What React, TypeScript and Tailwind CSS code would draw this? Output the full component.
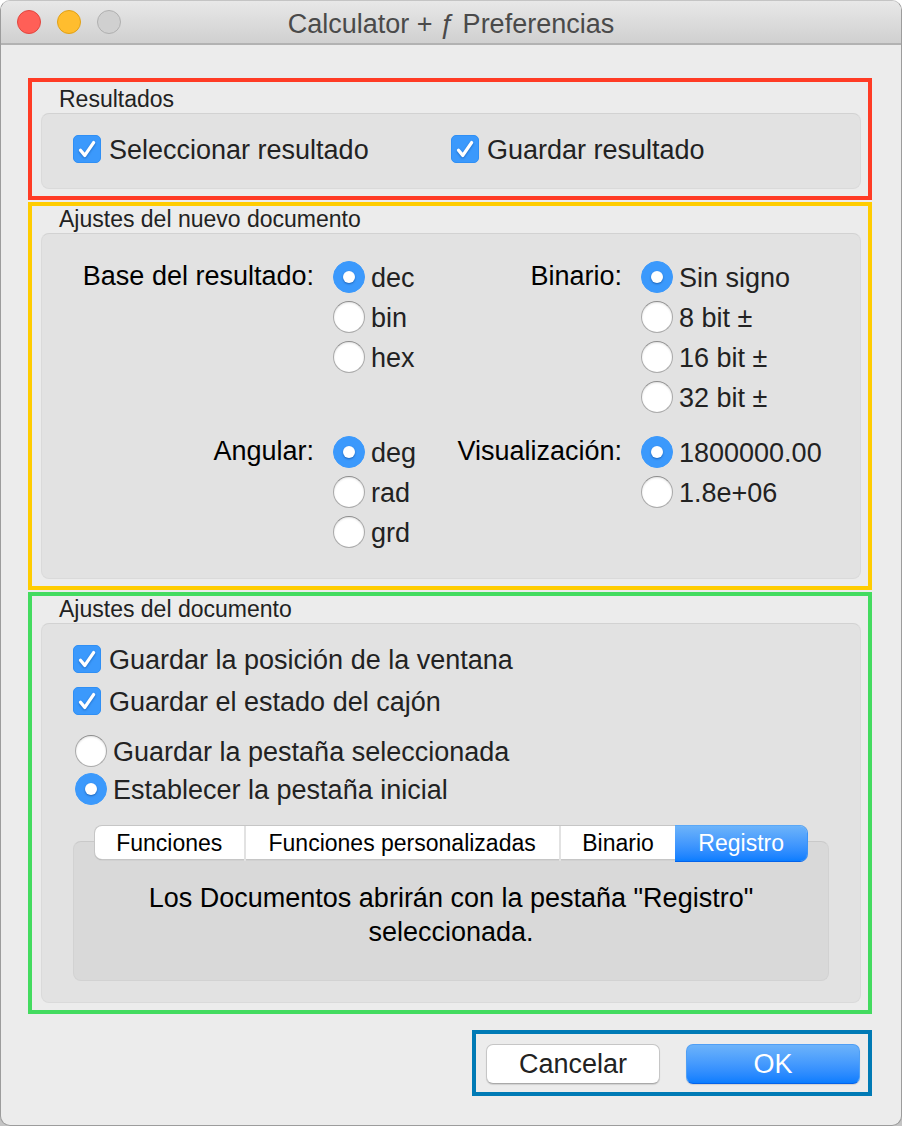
// Preferences window for Calculator + ƒ.
//
// Three boxed groups (results, new document, document) and the
// Cancel / OK pair. Every box has its own highlight colour.

import { useState, type ReactNode } from "react";

const TABS = ["Funciones", "Funciones personalizadas", "Binario", "Registro"];

/* ── Controls ── */

function Checkbox({ label }: { label: string }) {
  return (
    <label className="flex items-center gap-2 whitespace-nowrap text-[#222]">
      <span className="grid size-7 shrink-0">
        <input
          type="checkbox"
          defaultChecked
          className="peer col-start-1 row-start-1 size-7 appearance-none rounded-[5px] border border-[#aaa] bg-white checked:border-[#2f8ff5] checked:bg-[#3b99fc]"
        />
        <svg
          viewBox="0 0 28 28"
          className="pointer-events-none invisible col-start-1 row-start-1 size-7 drop-shadow-[0_1px_1px_rgba(0,60,140,0.5)] peer-checked:visible"
          fill="none"
          stroke="white"
          strokeWidth="3.3"
          strokeLinecap="round"
          strokeLinejoin="round"
        >
          <path d="M7.5 15.2 L11.8 20.4 L20.6 7.6" />
        </svg>
      </span>
      <span className="pt-0.5">{label}</span>
    </label>
  );
}

function Radio({ name, label, checked }: { name: string; label: string; checked?: boolean }) {
  return (
    <label className="flex h-full items-center gap-1.5 whitespace-nowrap text-[#222]">
      <input
        type="radio"
        name={name}
        defaultChecked={checked}
        className="grid size-8 shrink-0 appearance-none place-items-center rounded-full border border-[#aaa] border-t-[#8c8c8c] bg-white shadow-[inset_0_1px_2px_rgba(0,0,0,0.12)] before:size-3 before:rounded-full checked:border-[#3b99fc] checked:bg-[#3b99fc] checked:shadow-none checked:before:bg-white checked:before:shadow-[0_1px_2px_rgba(0,50,120,0.5)]"
      />
      <span className="pt-0.5">{label}</span>
    </label>
  );
}

function RadioGroup({ title, name, options }: { title: string; name: string; options: string[] }) {
  return (
    <>
      <span id={`${name}-label`} className="h-10 text-right leading-[38px] whitespace-nowrap text-black">
        {title}
      </span>
      <div role="radiogroup" aria-labelledby={`${name}-label`}>
        {options.map((option, i) => (
          <div key={option} className="h-10">
            <Radio name={name} label={option} checked={i === 0} />
          </div>
        ))}
      </div>
    </>
  );
}

function Group({ title, color, children }: { title: string; color: string; children: ReactNode }) {
  return (
    <section className={`border-4 pr-[7px] pb-[7px] pl-[9px] ${color}`}>
      <h2 className="pl-[18px] text-[23px] leading-[27px] text-[#222]">{title}</h2>
      <div className="rounded-lg border border-[#dadada] border-t-[#d2d2d2] bg-[#e2e2e2]">{children}</div>
    </section>
  );
}

/* ── Window ── */

export default function App() {
  const [tab, setTab] = useState("Registro");

  return (
    <div className="min-h-screen bg-linear-to-b from-white to-[#c4c4c4] font-['Liberation_Sans',Arial,sans-serif] text-[27px]">
      <div className="flex min-h-screen flex-col rounded-[10px] border border-[#9c9c9c] border-t-[#c4c4c4] bg-[#ececec]">
        {/* ── Title bar ── */}
        <header className="grid h-11 grid-cols-[1fr_auto_1fr] items-center rounded-t-[9px] border-b-2 border-[#b2b2b2] bg-linear-to-b from-[#e8e8e8] to-[#d0d0d0] px-4">
          <div className="flex gap-4">
            <button aria-label="Cerrar" className="size-6 rounded-full border border-[#e2463f] bg-[#ff5f57]" />
            <button aria-label="Minimizar" className="size-6 rounded-full border border-[#e1a116] bg-[#ffbd2e]" />
            <button aria-label="Ampliar" disabled className="size-6 rounded-full border border-[#b0b0b0] bg-[#d0d0d0]" />
          </div>
          <h1 className="pt-1 leading-9 text-[#4a4a4a]">Calculator + ƒ Preferencias</h1>
        </header>

        <main className="flex flex-col gap-0.5 px-[27px] pt-[33px] pr-[29px]">
          <Group title="Resultados" color="border-[#ff3b25] pt-1">
            <div className="grid h-[74px] grid-cols-2 items-center px-[31px] pb-1">
              <Checkbox label="Seleccionar resultado" />
              <Checkbox label="Guardar resultado" />
            </div>
          </Group>

          <Group title="Ajustes del nuevo documento" color="border-[#ffcc00]">
            <div className="grid grid-cols-[272px_1fr_168px_219px] gap-x-[19px] gap-y-[15px] pt-[23px] pb-[26px]">
              <RadioGroup title="Base del resultado:" name="base" options={["dec", "bin", "hex"]} />
              <RadioGroup title="Binario:" name="binario" options={["Sin signo", "8 bit ±", "16 bit ±", "32 bit ±"]} />
              <RadioGroup title="Angular:" name="angular" options={["deg", "rad", "grd"]} />
              <RadioGroup title="Visualización:" name="visualizacion" options={["1800000.00", "1.8e+06"]} />
            </div>
          </Group>

          <Group title="Ajustes del documento" color="border-[#43db5f]">
            <div className="px-[31px] pt-3.5 pb-[21px]">
              <div className="grid auto-rows-[42px] items-center">
                <Checkbox label="Guardar la posición de la ventana" />
                <Checkbox label="Guardar el estado del cajón" />
              </div>
              <div role="radiogroup" aria-label="Pestaña" className="mt-2.5 grid auto-rows-[38px] pl-0.5">
                <Radio name="pestana" label="Guardar la pestaña seleccionada" />
                <Radio name="pestana" label="Establecer la pestaña inicial" checked />
              </div>

              {/* Tab bar straddles the top edge of its panel */}
              <div
                role="tablist"
                className="relative mx-[22px] mt-[18px] grid h-[33px] grid-cols-[151fr_316fr_115fr_132fr] rounded-[7px] bg-white text-[23px] shadow-[0_0_0_1px_#c6c6c6,0_1px_1px_0_#8c8c8c]"
              >
                {TABS.map((name) => (
                  <button
                    key={name}
                    role="tab"
                    aria-selected={tab === name}
                    onClick={() => setTab(name)}
                    className="border-r-2 border-[#e2e2e2] whitespace-nowrap text-black first:rounded-l-[7px] last:rounded-r-[7px] last:border-r-0 aria-selected:border-transparent aria-selected:bg-linear-to-b aria-selected:from-[#6cb3fa] aria-selected:to-[#087dff] aria-selected:text-white aria-selected:shadow-[0_-1px_0_#5aa8f7,1px_0_0_#3b93f7,0_1px_0_#0463ea] has-[+[aria-selected=true]]:border-r-0"
                  >
                    {name}
                  </button>
                ))}
              </div>
              <div
                role="tabpanel"
                className="-mt-[18px] h-[140px] rounded-lg border border-[#d2d2d2] border-t-[#c9c9c9] bg-[#d9d9d9] px-10 pt-[39px] text-center leading-[34px] text-black"
              >
                {`Los Documentos abrirán con la pestaña "${tab}" seleccionada.`}
              </div>
            </div>
          </Group>
        </main>

        {/* ── Actions ── */}
        <footer className="mt-4 mr-[29px] flex gap-[26px] self-end border-4 border-[#007ab5] pt-2.5 pr-2 pb-2 pl-2.5">
          <button className="h-10 w-[174px] rounded-[7px] border border-[#c6c6c6] border-b-[#a9a9a9] bg-white leading-9 text-[#222] shadow-[0_1px_1px_rgba(0,0,0,0.12)]">
            Cancelar
          </button>
          <button className="h-10 w-[174px] rounded-[7px] border border-[#4f9ff5] border-b-[#0463ea] bg-linear-to-b from-[#6cb3fa] to-[#087dff] leading-9 text-white shadow-[0_1px_1px_rgba(0,0,0,0.12)]">
            OK
          </button>
        </footer>
      </div>
    </div>
  );
}
